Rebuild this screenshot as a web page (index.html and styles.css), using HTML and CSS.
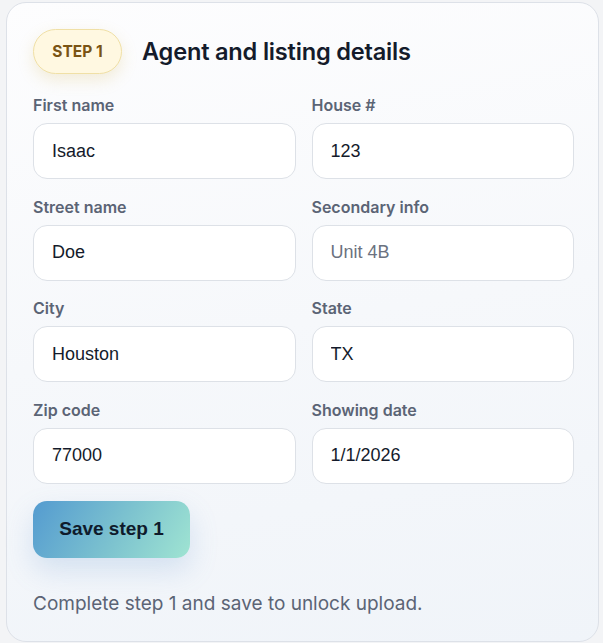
FILE: index.html
```html
<!DOCTYPE html>
<html lang="en">
<head>
<meta charset="utf-8">
<title>Step 1</title>
<link rel="stylesheet" href="styles.css">
</head>
<body>
<section class="card">
  <header class="head">
    <span class="badge">STEP 1</span>
    <h2 class="title">Agent and listing details</h2>
  </header>
  <div class="grid">
    <label class="field"><span class="label">First name</span><input class="input" value="Isaac"></label>
    <label class="field"><span class="label">House #</span><input class="input" value="123"></label>
    <label class="field"><span class="label">Street name</span><input class="input" value="Doe"></label>
    <label class="field"><span class="label">Secondary info</span><input class="input" placeholder="Unit 4B"></label>
    <label class="field"><span class="label">City</span><input class="input" value="Houston"></label>
    <label class="field"><span class="label">State</span><input class="input" value="TX"></label>
    <label class="field"><span class="label">Zip code</span><input class="input" value="77000"></label>
    <label class="field"><span class="label">Showing date</span><input class="input" value="1/1/2026"></label>
  </div>
  <button class="save" type="button">Save step 1</button>
  <p class="note">Complete step 1 and save to unlock upload.</p>
</section>
</body>
</html>
```
FILE: styles.css
```css
html, body {
  margin: 0;
  padding: 0;
  background: #f3f4f6;
}
body {
  font-family: Inter, "Noto Sans", sans-serif;
  padding: 2px 4px 0 6px;
}
.card {
  box-sizing: border-box;
  height: 640px;
  border: 1px solid #dde1e8;
  border-radius: 20px;
  background: linear-gradient(170deg, #fdfdfe 0%, #f6f8fb 50%, #f0f4f9 100%);
  padding: 26px 24px 0 26px;
}
.head {
  display: flex;
  align-items: center;
  gap: 20px;
}
.badge {
  box-sizing: border-box;
  height: 45px;
  width: 89px;
  display: inline-flex;
  align-items: center;
  justify-content: center;
  border-radius: 23px;
  background: #fff8e1;
  border: 1px solid #f0e0a6;
  color: #7a5414;
  font-weight: 700;
  font-size: 15.5px;
  box-shadow: 0 6px 16px rgba(214, 180, 80, 0.22);
}
.title {
  margin: 0;
  font-size: 23.6px;
  font-weight: 600;
  color: #141b2b;
  letter-spacing: -0.2px;
}
.grid {
  margin-top: 22px;
  display: grid;
  grid-template-columns: 1fr 1fr;
  column-gap: 16px;
  row-gap: 18.6px;
}
.field {
  display: flex;
  flex-direction: column;
  gap: 8px;
}
.label {
  font-size: 16px;
  line-height: 19px;
  font-weight: 600;
  color: #5b6475;
}
.input {
  box-sizing: border-box;
  height: 56px;
  width: 100%;
  border: 1px solid #dde1e7;
  border-radius: 14px;
  background: #ffffff;
  padding: 0 18px;
  font-family: "Liberation Sans", Arial, sans-serif;
  font-size: 18px;
  color: #141b2b;
  outline: none;
}
.input::placeholder {
  color: #6b7280;
}
.save {
  margin-top: 17px;
  width: 157px;
  height: 57px;
  border: none;
  border-radius: 14px;
  background: linear-gradient(120deg, #549bd0 0%, #7dc3cf 55%, #9fe4d2 100%);
  color: #0f1b2c;
  font-family: "Liberation Sans", Arial, sans-serif;
  font-weight: 700;
  font-size: 19px;
  box-shadow: 0 12px 28px rgba(100, 150, 210, 0.22);
}
.note {
  margin: 34px 0 0;
  font-size: 19px;
  color: #5b6475;
}
```
